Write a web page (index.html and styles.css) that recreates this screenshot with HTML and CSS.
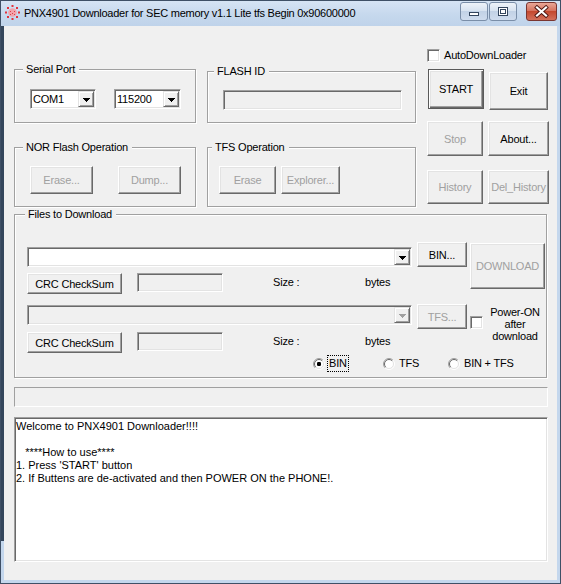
FILE: index.html
```html
<!DOCTYPE html>
<html>
<head>
<meta charset="utf-8">
<title>PNX4901 Downloader</title>
<link rel="stylesheet" href="styles.css">
</head>
<body>
<div class="window">
  <div class="titlebar">
    <svg class="app-icon" width="15" height="15" viewBox="0 0 15 15">
      <g fill="#e2323c">
        <rect x="6.5" y="0" width="2" height="2"/>
        <rect x="6.5" y="13" width="2" height="2"/>
        <rect x="0" y="6.5" width="2" height="2"/>
        <rect x="13" y="6.5" width="2" height="2"/>
        <rect x="2" y="2" width="2" height="2"/>
        <rect x="11" y="2" width="2" height="2"/>
        <rect x="2" y="11" width="2" height="2"/>
        <rect x="11" y="11" width="2" height="2"/>
      </g>
      <circle cx="7.5" cy="7.5" r="4.3" fill="#f3a3ab"/>
      <g fill="#d8414b">
        <rect x="5" y="6" width="1" height="1"/>
        <rect x="9" y="6" width="1" height="1"/>
        <rect x="7" y="8" width="1" height="1"/>
        <rect x="5" y="9" width="1" height="1"/>
        <rect x="9" y="9" width="1" height="1"/>
      </g>
    </svg>
    <span class="title-text">PNX4901 Downloader for SEC memory v1.1 Lite tfs Begin 0x90600000</span>
    <div class="caption-buttons">
      <span class="cap cap-min"><svg width="26" height="17" viewBox="0 0 26 17"><rect x="8.5" y="9.5" width="9" height="3" fill="#fff" stroke="#34465e"/></svg></span>
      <span class="cap cap-max"><svg width="26" height="17" viewBox="0 0 26 17"><rect x="8.5" y="4.5" width="9" height="8" fill="#fff" stroke="#34465e"/><rect x="10.5" y="6.5" width="5" height="4" fill="none" stroke="#34465e"/></svg></span>
      <span class="cap cap-close"><svg width="29" height="17" viewBox="0 0 29 17"><path d="M10 4.5l9 8M19 4.5l-9 8" stroke="#4a1410" stroke-width="4" stroke-linecap="square"/><path d="M10 4.5l9 8M19 4.5l-9 8" stroke="#fff" stroke-width="2.2" stroke-linecap="square"/></svg></span>
    </div>
  </div>

  <div class="client">
    <div class="top">
      <div class="left-col">
        <div class="row">
          <div class="group g-serial">
            <div class="group-title t-serial">Serial Port</div>
            <div class="group-body b-serial">
              <div class="combo c-com"><span class="combo-text">COM1</span><span class="combo-btn"><svg width="7" height="4" viewBox="0 0 7 4"><path d="M0 0h7v1h-1v1h-1v1h-1v1h-1v-1h-1v-1h-1v-1h-1z" fill="#000"/></svg></span></div>
              <div class="combo c-baud"><span class="combo-text">115200</span><span class="combo-btn"><svg width="7" height="4" viewBox="0 0 7 4"><path d="M0 0h7v1h-1v1h-1v1h-1v1h-1v-1h-1v-1h-1v-1h-1z" fill="#000"/></svg></span></div>
            </div>
          </div>
          <div class="group g-flash">
            <div class="group-title t-flash">FLASH ID</div>
            <div class="group-body b-flash">
              <div class="field f-flash"></div>
            </div>
          </div>
        </div>
        <div class="row row2">
          <div class="group g-nor">
            <div class="group-title t-nor">NOR Flash Operation</div>
            <div class="group-body b-nor">
              <button class="btn dis b-erase1" disabled>Erase...</button>
              <button class="btn dis b-dump" disabled>Dump...</button>
            </div>
          </div>
          <div class="group g-tfs">
            <div class="group-title t-tfs">TFS Operation</div>
            <div class="group-body b-tfs">
              <button class="btn dis b-erase2" disabled>Erase</button>
              <button class="btn dis b-explorer" disabled>Explorer...</button>
            </div>
          </div>
        </div>
      </div>

      <div class="right-col">
        <div class="check-row">
          <span class="checkbox"></span>
          <span class="check-label">AutoDownLoader</span>
        </div>
        <div class="btn-row r-start">
          <button class="btn btn-default b-start">START</button>
          <button class="btn b-exit">Exit</button>
        </div>
        <div class="btn-row r-stop">
          <button class="btn dis b-stop" disabled>Stop</button>
          <button class="btn b-about">About...</button>
        </div>
        <div class="btn-row r-hist">
          <button class="btn dis b-hist" disabled>History</button>
          <button class="btn dis b-delhist" disabled>Del_History</button>
        </div>
      </div>
    </div>

    <div class="group g-files">
      <div class="group-title t-files">Files to Download</div>
      <div class="files-main">
        <div class="files-left">
          <div class="frow fr1">
            <div class="combo c-bin"><span class="combo-text"></span><span class="combo-btn"><svg width="7" height="4" viewBox="0 0 7 4"><path d="M0 0h7v1h-1v1h-1v1h-1v1h-1v-1h-1v-1h-1v-1h-1z" fill="#000"/></svg></span></div>
            <button class="btn b-binfile">BIN...</button>
          </div>
          <div class="frow fr2">
            <button class="btn b-crc">CRC CheckSum</button>
            <div class="field f-crc"></div>
            <span class="size-label">Size :</span>
            <span class="bytes-label">bytes</span>
          </div>
          <div class="frow fr3">
            <div class="combo combo-dis c-tfs"><span class="combo-text"></span><span class="combo-btn"><svg width="7" height="4" viewBox="0 0 7 4"><path d="M0 0h7v1h-1v1h-1v1h-1v1h-1v-1h-1v-1h-1v-1h-1z" fill="#a0a0a0"/></svg></span></div>
            <button class="btn dis b-tfsfile" disabled>TFS...</button>
          </div>
          <div class="frow fr4">
            <button class="btn b-crc">CRC CheckSum</button>
            <div class="field f-crc"></div>
            <span class="size-label">Size :</span>
            <span class="bytes-label">bytes</span>
          </div>
        </div>
        <div class="files-right">
          <button class="btn dis b-download" disabled>DOWNLOAD</button>
          <div class="power">
            <span class="checkbox power-box"></span>
            <span class="power-text">Power-ON<br>after<br>download</span>
          </div>
        </div>
      </div>
      <div class="radios">
        <span class="radio r-bin">
          <svg width="12" height="12" viewBox="0 0 12 12"><circle cx="6" cy="6" r="5" fill="#fff"/><path d="M2.1 9.9A5.5 5.5 0 0 1 9.9 2.1" fill="none" stroke="#a0a0a0"/><path d="M9.9 2.1A5.5 5.5 0 0 1 2.1 9.9" fill="none" stroke="#fff"/><path d="M2.8 9.2A4.5 4.5 0 0 1 9.2 2.8" fill="none" stroke="#696969"/><path d="M9.2 2.8A4.5 4.5 0 0 1 2.8 9.2" fill="none" stroke="#e3e3e3"/><rect x="4" y="4" width="4" height="4" rx="1.2" fill="#000"/></svg>
          <span class="radio-label focus">BIN</span>
        </span>
        <span class="radio r-tfs">
          <svg width="12" height="12" viewBox="0 0 12 12"><circle cx="6" cy="6" r="5" fill="#fff"/><path d="M2.1 9.9A5.5 5.5 0 0 1 9.9 2.1" fill="none" stroke="#a0a0a0"/><path d="M9.9 2.1A5.5 5.5 0 0 1 2.1 9.9" fill="none" stroke="#fff"/><path d="M2.8 9.2A4.5 4.5 0 0 1 9.2 2.8" fill="none" stroke="#696969"/><path d="M9.2 2.8A4.5 4.5 0 0 1 2.8 9.2" fill="none" stroke="#e3e3e3"/></svg>
          <span class="radio-label">TFS</span>
        </span>
        <span class="radio r-both">
          <svg width="12" height="12" viewBox="0 0 12 12"><circle cx="6" cy="6" r="5" fill="#fff"/><path d="M2.1 9.9A5.5 5.5 0 0 1 9.9 2.1" fill="none" stroke="#a0a0a0"/><path d="M9.9 2.1A5.5 5.5 0 0 1 2.1 9.9" fill="none" stroke="#fff"/><path d="M2.8 9.2A4.5 4.5 0 0 1 9.2 2.8" fill="none" stroke="#696969"/><path d="M9.2 2.8A4.5 4.5 0 0 1 2.8 9.2" fill="none" stroke="#e3e3e3"/></svg>
          <span class="radio-label">BIN + TFS</span>
        </span>
      </div>
    </div>

    <div class="progress"></div>

    <div class="log">Welcome to PNX4901 Downloader!!!!

   ****How to use****
1. Press 'START' button
2. If Buttens are de-activated and then POWER ON the PHONE!.</div>
  </div>
</div>
</body>
</html>
```

FILE: styles.css
```css
* { box-sizing: border-box; }

html, body {
  margin: 0;
  padding: 0;
  background: #c4d7ed;
}

body {
  width: 561px;
  height: 584px;
  overflow: hidden;
  font-family: "Liberation Sans", Arial, sans-serif;
  font-size: 11px;
  color: #000;
}

.window {
  width: 561px;
  height: 584px;
  border: 1px solid #3f5066;
  padding: 0 3px 3px;
  display: flex;
  flex-direction: column;
  background: linear-gradient(#34465c, #34465c) 0 25px / 3px 515px no-repeat, #c4d7ed;
}

/* ---------- title bar ---------- */
.titlebar {
  height: 25px;
  margin: 0 -3px;
  display: flex;
  align-items: flex-start;
  flex: none;
  background: linear-gradient(#d6e4f4, #c6d8ed 55%, #bfd3ea);
}

.app-icon {
  flex: none;
  margin: 4px 0 0 4px;
}

.title-text {
  margin: 5px 0 0 4px;
  line-height: 15px;
  font-size: 11px;
  letter-spacing: -0.25px;
  white-space: nowrap;
  color: #000;
}

.caption-buttons {
  margin: 1px 3px 0 auto;
  display: flex;
}

.cap {
  display: block;
  height: 19px;
  border-radius: 3px;
}

.cap svg { display: block; }

.cap-min,
.cap-max {
  width: 28px;
  border: 1px solid #7a8ea8;
  background: linear-gradient(#eef3f9, #d8e3f0 45%, #c2d2e6 50%, #cfdcee);
}

.cap-max { margin-left: 1px; }

.cap-close {
  width: 31px;
  margin-left: 9px;
  border: 1px solid #7a3530;
  background: linear-gradient(#e9a797, #d6735f 45%, #c4492f 50%, #d2705b);
}

/* ---------- client ---------- */
.client {
  flex: 1;
  background: #f0f0f0;
  padding: 0 8px 0 10px;
  display: flex;
  flex-direction: column;
  letter-spacing: -0.2px;
}

.top {
  display: flex;
  flex: none;
}

.left-col {
  width: 402px;
  padding-top: 43px;
  flex: none;
}

.row { display: flex; align-items: flex-start; }
.row2 { margin-top: 24px; }

/* ---------- group boxes ---------- */
.group {
  flex: none;
  border: 1px solid #a0a0a0;
  box-shadow: inset 1px 1px 0 #fff, 1px 1px 0 #fff;
}

.group-title {
  width: max-content;
  margin: -7px 0 -6px 8px;
  padding: 0 4px 0 3px;
  line-height: 13px;
  background: #f0f0f0;
}

.group-body {
  display: flex;
  align-items: flex-start;
}

.g-serial { width: 182px; height: 54px; }
.b-serial { padding: 19px 0 0 15px; }

.g-flash { width: 209px; height: 52px; margin: 2px 0 0 11px; }
.t-flash { margin-left: 6px; }
.b-flash { padding: 18px 0 0 15px; }

.g-nor { width: 182px; height: 60px; }
.b-nor { padding: 18px 0 0 15px; }

.g-tfs { width: 209px; height: 60px; margin-left: 11px; }
.t-tfs { margin-left: 4px; }
.b-tfs { padding: 18px 0 0 11px; }

/* ---------- controls ---------- */
.btn {
  appearance: none;
  margin: 0;
  padding: 0;
  font: inherit;
  letter-spacing: inherit;
  color: #000;
  flex: none;
  background: #f0f0f0;
  border: 1px solid;
  border-color: #fff #696969 #696969 #fff;
  box-shadow: inset -1px -1px 0 #a0a0a0, inset 1px 1px 0 #e3e3e3;
  white-space: nowrap;
}

.btn.dis { color: #a0a0a0; }

.btn-default {
  border: 1px solid #5a5a5a;
  box-shadow: inset 1px 1px 0 #fff, inset -1px -1px 0 #696969, inset -2px -2px 0 #a0a0a0, inset 2px 2px 0 #e3e3e3;
}

.field {
  flex: none;
  background: #f0f0f0;
  border: 1px solid;
  border-color: #a0a0a0 #fff #fff #a0a0a0;
  box-shadow: inset 1px 1px 0 #696969, inset -1px -1px 0 #e3e3e3;
}

.combo {
  flex: none;
  display: flex;
  height: 20px;
  background: #fff;
  border: 1px solid;
  border-color: #a0a0a0 #fff #fff #a0a0a0;
  box-shadow: inset 1px 1px 0 #696969, inset -1px -1px 0 #e3e3e3;
  padding: 1px;
}

.combo-dis { background: #f0f0f0; }

.combo-text {
  flex: 1;
  padding-left: 1px;
  line-height: 16px;
  white-space: nowrap;
}

.combo-btn {
  flex: none;
  width: 16px;
  display: flex;
  align-items: center;
  justify-content: center;
  background: #f0f0f0;
  border: 1px solid;
  border-color: #e3e3e3 #696969 #696969 #e3e3e3;
  box-shadow: inset 1px 1px 0 #fff, inset -1px -1px 0 #a0a0a0;
}

.combo-btn svg { display: block; margin-top: 1px; }

.c-com { width: 66px; }
.c-baud { width: 67px; margin-left: 18px; }

.f-flash { width: 179px; height: 20px; }

.b-erase1 { width: 63px; height: 28px; }
.b-dump { width: 63px; height: 28px; margin-left: 25px; }
.b-erase2 { width: 57px; height: 28px; }
.b-explorer { width: 59px; height: 28px; margin-left: 5px; }

/* ---------- right column ---------- */
.right-col {
  flex: none;
  width: 122px;
  margin-left: 11px;
  padding-top: 23px;
  display: flex;
  flex-direction: column;
}

.checkbox {
  flex: none;
  display: block;
  width: 13px;
  height: 13px;
  background: #fff;
  border: 1px solid;
  border-color: #a0a0a0 #fff #fff #a0a0a0;
  box-shadow: inset 1px 1px 0 #696969, inset -1px -1px 0 #e3e3e3;
}

.check-row {
  display: flex;
  align-items: center;
  height: 13px;
}

.check-label {
  margin-left: 4px;
  line-height: 13px;
  white-space: nowrap;
}

.btn-row {
  display: flex;
  align-items: flex-start;
}

.r-start { margin-top: 7px; }
.b-start { width: 56px; height: 40px; margin-left: 1px; }
.b-exit { width: 59px; height: 38px; margin: 3px 0 0 5px; }

.r-stop { margin-top: 11px; }
.b-stop { width: 56px; height: 35px; }
.b-about { width: 61px; height: 35px; margin-left: 5px; }

.r-hist { margin-top: 14px; }
.b-hist { width: 56px; height: 34px; }
.b-delhist { width: 61px; height: 34px; margin-left: 5px; }

/* ---------- files group ---------- */
.g-files {
  width: 533px;
  height: 164px;
  margin-top: 7px;
}

.t-files { margin-left: 10px; }

.files-main { display: flex; }

.files-left {
  flex: none;
  width: 440px;
  margin-left: 12px;
  padding-top: 27px;
  display: flex;
  flex-direction: column;
}

.frow { display: flex; align-items: flex-start; }

.fr1 { align-items: flex-end; }
.c-bin { width: 385px; }
.b-binfile { width: 50px; height: 25px; margin-left: 5px; }

.fr2 { margin-top: 6px; }
.fr3 { margin-top: 10px; }
.fr4 { margin-top: 3px; }

.b-crc { width: 95px; height: 21px; }
.f-crc { width: 86px; height: 19px; margin-left: 15px; }

.size-label {
  width: 92px;
  margin: 3px 0 0 50px;
  line-height: 13px;
  white-space: nowrap;
}

.bytes-label {
  margin-top: 3px;
  line-height: 13px;
}

.c-tfs { width: 385px; margin-top: 1px; }
.b-tfsfile { width: 50px; height: 25px; margin-left: 5px; }

.files-right {
  flex: none;
  width: 75px;
  margin-left: 3px;
  padding-top: 28px;
  display: flex;
  flex-direction: column;
}

.b-download { width: 75px; height: 46px; }

.power {
  display: flex;
  align-items: flex-start;
  margin-top: 17px;
}

.power-box { margin-top: 10px; }

.power-text {
  width: 60px;
  margin-left: 2px;
  text-align: center;
  line-height: 12px;
  white-space: nowrap;
}

.radios {
  display: flex;
  align-items: center;
  height: 13px;
  margin-top: 4px;
  padding-left: 298px;
}

.radio {
  flex: none;
  display: flex;
  align-items: center;
}

.radio svg { display: block; flex: none; }

.r-bin { width: 70px; }
.r-tfs { width: 65px; }

.radio-label {
  margin-left: 4px;
  line-height: 13px;
  white-space: nowrap;
}

.radio-label.focus {
  outline: 1px dotted #000;
  outline-offset: 1px;
}

/* ---------- progress & log ---------- */
.progress {
  flex: none;
  width: 534px;
  height: 20px;
  margin-top: 9px;
  background: #f0f0f0;
  border: 1px solid;
  border-color: #a0a0a0 #fff #fff #a0a0a0;
}

.log {
  flex: none;
  width: 534px;
  height: 145px;
  margin-top: 10px;
  background: #fff;
  border: 1px solid;
  border-color: #a0a0a0 #fff #fff #a0a0a0;
  box-shadow: inset 1px 1px 0 #696969, inset -1px -1px 0 #e3e3e3;
  padding: 2px 0 0 1px;
  line-height: 13px;
  letter-spacing: 0;
  white-space: pre;
}
```
